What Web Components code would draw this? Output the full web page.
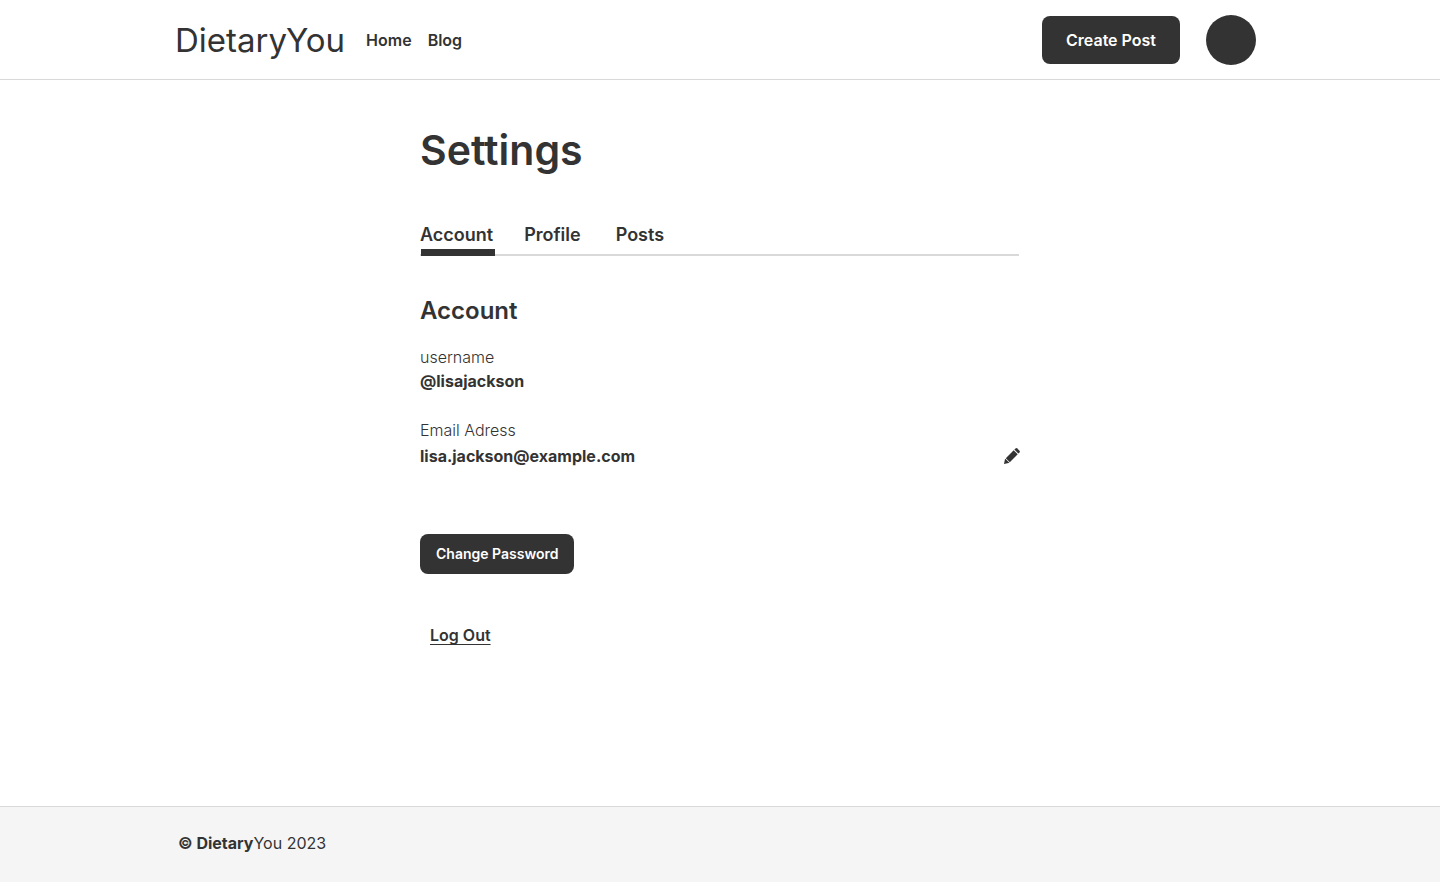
<!DOCTYPE html>
<html lang="en">
<head>
<meta charset="utf-8">
<meta name="viewport" content="width=device-width, initial-scale=1">
<title>Settings – DietaryYou</title>
<style>
  :root { --ink: #333; --line: #d9d9d9; --panel: #f5f5f5; }
  body { margin: 0; background: #fff; color: var(--ink); font: 400 16px/24px Inter, sans-serif; }
</style>
</head>
<body>
<settings-page></settings-page>
<script>
const define = (name, html) => {
  const template = document.createElement('template');
  template.innerHTML = '<style>*{box-sizing:border-box}a{color:inherit;text-decoration:none}</style>' + html;
  customElements.define(name, class extends HTMLElement {
    constructor() {
      super();
      this.attachShadow({ mode: 'open' }).append(template.content.cloneNode(true));
    }
  });
};

define('app-button', `
<style>
  :host { display: block; }
  button { display: block; height: var(--height, 48px); padding: 0 var(--pad, 24px); border: 0; border-radius: 8px;
    background: var(--ink); color: #fff; font: 600 var(--size, 16px)/24px Inter, sans-serif; cursor: pointer; }
</style>
<button type="button"><slot></slot></button>`);

define('site-header', `
<style>
  :host { display: block; border-bottom: 1px solid var(--line); }
  .inner { display: flex; align-items: center; max-width: 1090px; height: 79px; margin: 0 auto; padding-right: 9px; }
  .logo { font-size: 33px; line-height: 40px; }
  nav { display: flex; gap: 16px; margin-left: 21px; font-weight: 600; }
  app-button { margin-left: auto; }
  .avatar { width: 50px; height: 50px; margin-left: 26px; padding: 0; border: 0; border-radius: 50%; background: var(--ink); }
</style>
<header class="inner">
  <a class="logo" href="#">DietaryYou</a>
  <nav><a href="#">Home</a><a href="#">Blog</a></nav>
  <app-button>Create Post</app-button>
  <button class="avatar" type="button" aria-label="Profile menu"></button>
</header>`);

define('settings-tabs', `
<style>
  :host { display: block; }
  nav { display: flex; margin-right: 1px; border-bottom: 2px solid var(--line); font-size: 18px; font-weight: 600; line-height: 24px; }
  a { position: relative; padding-bottom: 7px; }
  a + a { margin-left: 31px; }
  a + a + a { margin-left: 35px; }
  [aria-current]::after { content: ""; position: absolute; left: 1px; right: -2px; bottom: -2px; height: 7px; background: var(--ink); }
</style>
<nav><a href="#" aria-current="page">Account</a><a href="#">Profile</a><a href="#">Posts</a></nav>`);

define('info-field', `
<style>
  :host { display: block; }
  dl, dd { margin: 0; }
  dt { font-weight: 300; }
  dd { display: flex; justify-content: space-between; align-items: center; margin-top: var(--gap, 0); font-weight: 700; }
</style>
<dl><dt><slot name="label"></slot></dt><dd><slot></slot><slot name="action"></slot></dd></dl>`);

define('edit-button', `
<style>
  :host { display: block; }
  button { display: block; padding: 0; border: 0; background: none; color: var(--ink); cursor: pointer; }
  svg { display: block; }
</style>
<button type="button" aria-label="Edit email">
  <svg width="16" height="16" viewBox="0 0 16 16" fill="currentColor">
    <path d="M0 16 .9 11.4Q1 11 1.3 10.7L5.3 14.7Q5 15 4.6 15.1Z"/>
    <path d="M1.8 10.2 9.7 2.3 13.7 6.3 5.8 14.2Z"/>
    <path d="M10.4 1.6 11.5.5Q12.4-.3 13.3.5L15.5 2.7Q16.3 3.6 15.5 4.5L14.4 5.6Z"/>
  </svg>
</button>`);

define('site-footer', `
<style>
  :host { display: block; background: var(--panel); border-top: 1px solid var(--line); }
  footer { max-width: 1084px; margin: 0 auto; padding: 24px 0 27px; }
  b { font-weight: 700; }
</style>
<footer><b>© Dietary</b>You 2023</footer>`);

define('settings-page', `
<style>
  :host { display: flex; flex-direction: column; min-height: 100vh; }
  main { flex: 1; width: 100%; max-width: 600px; margin: 0 auto; padding-top: 46px; }
  h1, h2 { margin: 0; font-weight: 600; }
  h1 { font-size: 41px; line-height: 48px; }
  h2 { margin: 39px 0 18px; font-size: 24px; line-height: 32px; }
  settings-tabs { margin-top: 49px; }
  info-field + info-field { --gap: 2px; margin-top: 25px; }
  .change { --height: 40px; --pad: 16px; --size: 14px; margin-top: 66px; }
  .logout { display: inline-block; margin: 49px 10px; font-weight: 600; text-decoration: underline; text-underline-offset: 3px; text-decoration-thickness: 1px; }
</style>
<site-header></site-header>
<main>
  <h1>Settings</h1>
  <settings-tabs></settings-tabs>
  <h2>Account</h2>
  <info-field><span slot="label">username</span>@lisajackson</info-field>
  <info-field><span slot="label">Email Adress</span>lisa.jackson@example.com<edit-button slot="action"></edit-button></info-field>
  <app-button class="change">Change Password</app-button>
  <a class="logout" href="#">Log Out</a>
</main>
<site-footer></site-footer>`);
</script>
</body>
</html>
